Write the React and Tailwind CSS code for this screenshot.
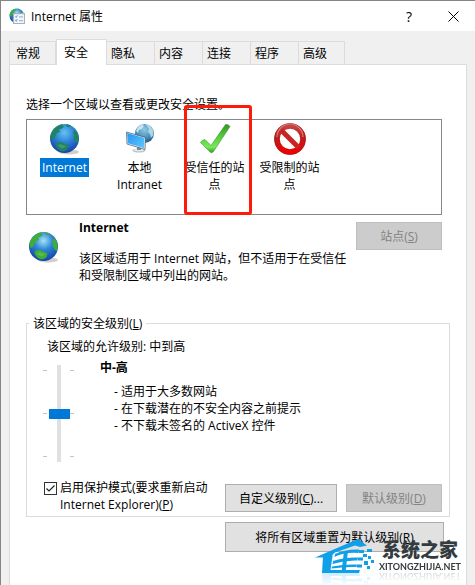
import { useState } from 'react';

const tabs = ['常规', '安全', '隐私', '内容', '连接', '程序', '高级'];

function Globe({ id, className, land = '#3fae35', light = '#a5e2f8' }) {
  return (
    <svg viewBox="0 0 32 32" className={className} aria-hidden="true">
      <defs>
        <radialGradient id={id} cx="0.5" cy="0.3" r="0.7">
          <stop offset="0" stopColor={light} />
          <stop offset="0.45" stopColor="#2f86d6" />
          <stop offset="1" stopColor="#1640a4" />
        </radialGradient>
      </defs>
      <ellipse cx="20" cy="29" rx="10" ry="2.5" fill="#cfcfcf" />
      <circle cx="15.5" cy="15.5" r="14.5" fill={`url(#${id})`} />
      <path d="M1.5 13 C3 7 7 3 13 1.3 L14 3 L15 4 L12 6 L10 6 L11 9 L8 10 L6 14 L4 17 L2 16 Z" fill={land} />
      <path d="M24 9 L26 7 C29 10 30.5 15 29 20 L27 19 L25 16 L25 13 Z" fill={land} />
      <path d="M6.5 21 C9 18 12 19 14 20 L19 22 C20 25 18 28 14 28.5 C10 28 7 25 6.5 21 Z" fill={land} />
      <path d="M17 1 L22 2.5 L21 4 L18 4 Z" fill={land} />
      <path d="M9 22 C11 20 14 22 17 23 C15 26 11 26 9 22 Z" fill="white" opacity="0.15" />
    </svg>
  );
}

function Intranet() {
  return (
    <svg viewBox="0 0 32 32" className="h-8 w-8" aria-hidden="true">
      <defs>
        <radialGradient id="net" cx="0.5" cy="0.3" r="0.7">
          <stop offset="0" stopColor="#8fc9e2" />
          <stop offset="0.6" stopColor="#4a93bd" />
          <stop offset="1" stopColor="#1d5480" />
        </radialGradient>
        <linearGradient id="screen" x1="0" y1="0" x2="1" y2="1">
          <stop offset="0" stopColor="#2496f2" />
          <stop offset="1" stopColor="#62c6ff" />
        </linearGradient>
      </defs>
      <circle cx="20.5" cy="10.5" r="9.5" fill="url(#net)" />
      <path d="M12 8 L14 4 L18 1.5 L20 3 L18 6 L15 7 L14 10 Z" fill="#cde9f0" opacity="0.9" />
      <path d="M22 1.5 L26 3 L29 7 L29.5 12 L27 15 L26 11 L24 9 L25 6 Z" fill="#cde9f0" opacity="0.75" />
      <ellipse cx="15" cy="27.5" rx="6.5" ry="2" fill="#b9c4cc" />
      <ellipse cx="15" cy="27" rx="5" ry="1.2" fill="#e6ecf0" />
      <path d="M13 23 L17 24 L17 27 L13 27 Z" fill="#7f8b94" />
      <path d="M2.5 9 L21.5 14.5 L21 26.5 L3 21 Z" fill="#f2f8fb" stroke="#3e4f5c" strokeWidth="0.7" />
      <path d="M3.2 10 L20.5 15 L20 25.2 L3.8 20.3 Z" fill="url(#screen)" />
    </svg>
  );
}

function Check() {
  return (
    <svg viewBox="0 0 32 32" className="h-8 w-8" aria-hidden="true">
      <defs>
        <linearGradient id="tick" x1="0" y1="0" x2="0" y2="1">
          <stop offset="0" stopColor="#36942b" />
          <stop offset="0.5" stopColor="#5ed243" />
          <stop offset="0.8" stopColor="#7be95c" />
          <stop offset="1" stopColor="#2f9e22" />
        </linearGradient>
      </defs>
      <path d="M1.5 19.5 Q2.5 17 6 16.5 L12 22.5 L26.5 1.5 Q29.5 1 31 3.5 L14.5 28.5 Q12.5 31 10.5 28.5 Z" fill="url(#tick)" stroke="#3f9b33" strokeWidth="0.6" />
    </svg>
  );
}

function Forbidden() {
  return (
    <svg viewBox="0 0 32 32" className="h-8 w-8" aria-hidden="true">
      <defs>
        <linearGradient id="ban" x1="0" y1="0" x2="0" y2="1">
          <stop offset="0" stopColor="#c44444" />
          <stop offset="0.5" stopColor="#c01a1a" />
          <stop offset="1" stopColor="#f00000" />
        </linearGradient>
      </defs>
      <circle cx="16" cy="16" r="13" fill="white" stroke="url(#ban)" strokeWidth="5.6" />
      <path d="M7 7 L25 25" stroke="#c92424" strokeWidth="5" />
      <circle cx="16" cy="16" r="15.5" fill="none" stroke="#a01818" strokeWidth="0.6" />
      <path d="M3 14 A13 13 0 0 1 29 14" fill="none" stroke="#e79a9a" strokeWidth="1.2" opacity="0.7" />
    </svg>
  );
}

const zones = [
  { name: 'Internet', icon: <Globe id="zone" className="h-8 w-8" land="#1f8560" light="#63c3f5" /> },
  { name: '本地 Intranet', icon: <Intranet /> },
  { name: '受信任的站点', icon: <Check /> },
  { name: '受限制的站点', icon: <Forbidden /> },
];

function Button({ className = '', ...props }) {
  return (
    <button
      className={`border border-[#adadad] bg-[#e1e1e1] text-center disabled:border-[#bfbfbf] disabled:bg-[#cccccc] disabled:text-[#838383] ${className}`}
      {...props}
    />
  );
}

function Ticks() {
  return (
    <div className="flex h-[87px] w-1 flex-col justify-between">
      <span className="h-px bg-[#c4c4c4]" />
      <span className="h-px bg-[#c4c4c4]" />
      <span className="h-px bg-[#c4c4c4]" />
    </div>
  );
}

function Watermark() {
  return (
    <div className="pointer-events-none absolute right-3.5 bottom-3 flex items-end gap-1">
      <svg viewBox="0 0 60 34" className="h-[34px] w-[60px] [-webkit-box-reflect:below_0_linear-gradient(transparent_60%,rgba(0,0,0,0.2))]" aria-hidden="true">
        {/* roof */}
        <path d="M0 18.5 L43 0 L52 6.5 L45 8 L40 6.5 L20 13.5 Q17.5 15 17 18.5 Z" fill="#10a0ea" />
        {/* wall and floors */}
        <path d="M8 17 H17.5 L15.5 31 H45 L44 34 H7 Z" fill="#10a0ea" />
        <path d="M20 15 Q30 10 44 10.5 L43.5 14 Q30 13 19.5 18 Z" fill="#10a0ea" />
        <path d="M18 22 Q30 18 43 18.5 L42.5 21.5 Q30 21 17.5 25 Z" fill="#10a0ea" />
        <path d="M17 27.5 Q30 25 42 25.5 L41.5 28 Q30 27.5 16.5 29.5 Z" fill="#10a0ea" />
        <path d="M29 12 H33 L30.5 33 H26.5 Z" fill="#10a0ea" />
        {/* loose squares */}
        <path d="M44 11 h5 v3 h-5 Z M52 10 h5 v3 h-5 Z M48 15 h4 v3 h-4 Z M43 18.5 h5 v3 h-5 Z M53 17 h3 v3 h-3 Z M49 22 h4 v4 h-4 Z M56 21 h3 v3 h-3 Z M42 25.5 h5 v3 h-5 Z M52 27 h3 v3 h-3 Z" fill="#10a0ea" />
      </svg>
      <div className="text-center text-[#343b3e]">
        <div className="text-[19px] leading-[21px] font-black">系统之家</div>
        <div className="font-['Lato'] text-[9px] leading-3 font-bold [-webkit-box-reflect:below_-3px_linear-gradient(transparent,rgba(0,0,0,0.25))]">XITONGZHIJIA.NET</div>
      </div>
    </div>
  );
}

export default function App() {
  const [tab, setTab] = useState('安全');
  const [zone, setZone] = useState('Internet');
  const [level, setLevel] = useState(1);
  const [isProtected, setIsProtected] = useState(true);

  return (
    <div className="relative flex min-h-screen flex-col overflow-hidden border-t border-l border-[#858585] bg-[#f0f0f0] font-['Open_Sans','Noto_Sans_CJK_SC',sans-serif] text-[12px] leading-[17px] text-black">
      <header className="flex h-[30px] items-center bg-white pr-2.5 pl-2">
        <span className="relative h-4 w-4">
          <Globe id="title" className="h-4 w-4" />
          <svg viewBox="0 0 11 11" className="absolute top-1 left-1 h-3 w-3" aria-hidden="true">
            <path d="M0.5 1.5 H10.5 V10.5 H0.5 Z" fill="#f4f7fa" stroke="#a5b1bd" />
            <path d="M2 4 L3 5 L4 3 M2 7.5 L3 8.5 L4 6.5" fill="none" stroke="#3f8fd0" strokeWidth="0.8" />
            <path d="M5.5 4.5 H9 M5.5 8 H9" fill="none" stroke="#8898a8" strokeWidth="0.8" />
          </svg>
        </span>
        <h1 className="ml-1.5 flex-1">Internet 属性</h1>
        <button aria-label="帮助" className="w-6 text-[14px]">?</button>
        <button aria-label="关闭" className="ml-5 flex w-6 justify-center">
          <svg viewBox="0 0 11 11" className="h-[11px] w-[11px]" aria-hidden="true">
            <path d="M0.5 0.5 L10.5 10.5 M10.5 0.5 L0.5 10.5" stroke="black" fill="none" />
          </svg>
        </button>
      </header>

      <div className="flex flex-1 flex-col pt-[9px] pr-2 pl-2">
        <div role="tablist" className="z-10 flex h-6 items-end">
          {tabs.map((name) => (
            <button
              key={name}
              role="tab"
              aria-selected={tab === name}
              onClick={() => setTab(name)}
              className={tab === name
                ? '-mb-px h-[26px] w-[51px] self-end border border-b-0 border-[#dcdcdc] bg-white pl-[7px] text-left'
                : 'h-[23px] w-12 border border-b-0 border-l-0 border-[#dcdcdc] pl-1 text-left first:w-[47px] first:border-l first:pl-1.5 last:w-[46px]'}
            >
              {name}
            </button>
          ))}
        </div>

        <main className="flex-1 border border-b-0 border-[#dcdcdc] bg-white pt-[31px] pr-4 pb-8 pl-4">
          <p>选择一个区域以查看或更改安全设置。</p>

          <div role="listbox" aria-label="区域" className="mt-1.5 mr-2 flex h-24 border border-[#828790] pt-[3px]">
            {zones.map((z) => (
              <button
                key={z.name}
                role="option"
                aria-selected={zone === z.name}
                onClick={() => setZone(z.name)}
                className="relative flex w-[75px] flex-col items-center px-1"
              >
                {z.icon}
                <span className={zone === z.name ? 'mt-[3px] bg-[#0078d7] px-0.5 py-px text-white' : 'mt-1 w-[62px]'}>{z.name}</span>
                {z.name === '受信任的站点' && (
                  <span className="absolute -top-[18px] left-[7px] h-[110px] w-[68px] rounded-[3px] border-3 border-[#ff1a0a]" />
                )}
              </button>
            ))}
          </div>

          <section className="mt-1 mr-2 flex items-start">
            <Globe id="detail" className="mt-3 ml-0.5 h-8 w-8" />
            <div className="ml-[19px] flex-1">
              <div className="flex items-start justify-between">
                <h2 className="font-bold">Internet</h2>
                <Button disabled className="mt-[3px] h-7 w-[86px]">站点(<u>S</u>)</Button>
              </div>
              <p className="w-[276px]">该区域适用于 Internet 网站，但不适用于在受信任和受限制区域中列出的网站。</p>
            </div>
          </section>

          <fieldset className="mt-[31px] h-[202px] border border-[#dcdcdc] pl-4">
            <legend className="-ml-3.5 px-1">该区域的安全级别(<u>L</u>)</legend>
            <p className="mt-1.5 ml-1">该区域的允许级别: 中到高</p>
            <div className="mt-1 flex">
              <div className="mt-1.5 flex h-[97px] items-center gap-px">
                <Ticks />
                <input
                  type="range"
                  aria-label="该区域的安全级别"
                  min="0"
                  max="2"
                  value={level}
                  onChange={(e) => setLevel(Number(e.target.value))}
                  className="h-[97px] w-[21px] appearance-none bg-transparent [direction:rtl] [writing-mode:vertical-lr] [&::-webkit-slider-runnable-track]:flex [&::-webkit-slider-runnable-track]:w-1 [&::-webkit-slider-runnable-track]:bg-[#e0e0e0] [&::-webkit-slider-thumb]:-ml-2 [&::-webkit-slider-thumb]:h-2.5 [&::-webkit-slider-thumb]:w-[21px] [&::-webkit-slider-thumb]:appearance-none [&::-webkit-slider-thumb]:bg-[#0078d7]"
                />
                <Ticks />
              </div>
              <div className="ml-[26px]">
                <h3 className="font-bold">中-高</h3>
                <ul className="mt-[7px] ml-3.5">
                  <li>- 适用于大多数网站</li>
                  <li>- 在下载潜在的不安全内容之前提示</li>
                  <li>- 不下载未签名的 ActiveX 控件</li>
                </ul>
              </div>
            </div>
            <div className="mt-4 mr-[7px] flex items-start">
              <label className="flex flex-1 items-start">
                <span className="relative mt-1 ml-px h-[13px] w-[13px]">
                  <input
                    type="checkbox"
                    checked={isProtected}
                    onChange={(e) => setIsProtected(e.target.checked)}
                    className="block h-[13px] w-[13px] appearance-none border border-[#333333] bg-white"
                  />
                  {isProtected && (
                    <svg viewBox="0 0 13 13" className="pointer-events-none absolute top-0 left-0 h-[13px] w-[13px]" aria-hidden="true">
                      <path d="M2.5 6.5 L5 9 L10.5 3.5" fill="none" stroke="#222" strokeWidth="1.2" />
                    </svg>
                  )}
                </span>
                <span className="mt-px ml-[3px] w-[154px]">启用保护模式(要求重新启动 Internet Explorer)(<u>P</u>)</span>
              </label>
              <Button className="mt-1.5 h-7 w-28">自定义级别(<u>C</u>)...</Button>
              <Button disabled className="mt-1.5 ml-[9px] h-7 w-24">默认级别(<u>D</u>)</Button>
            </div>
          </fieldset>

          <div className="mt-[5px] mr-1.5 flex justify-end">
            <Button className="h-[30px] w-[219px]">将所有区域重置为默认级别(<u>R</u>)</Button>
          </div>
        </main>
      </div>
      <Watermark />
    </div>
  );
}
